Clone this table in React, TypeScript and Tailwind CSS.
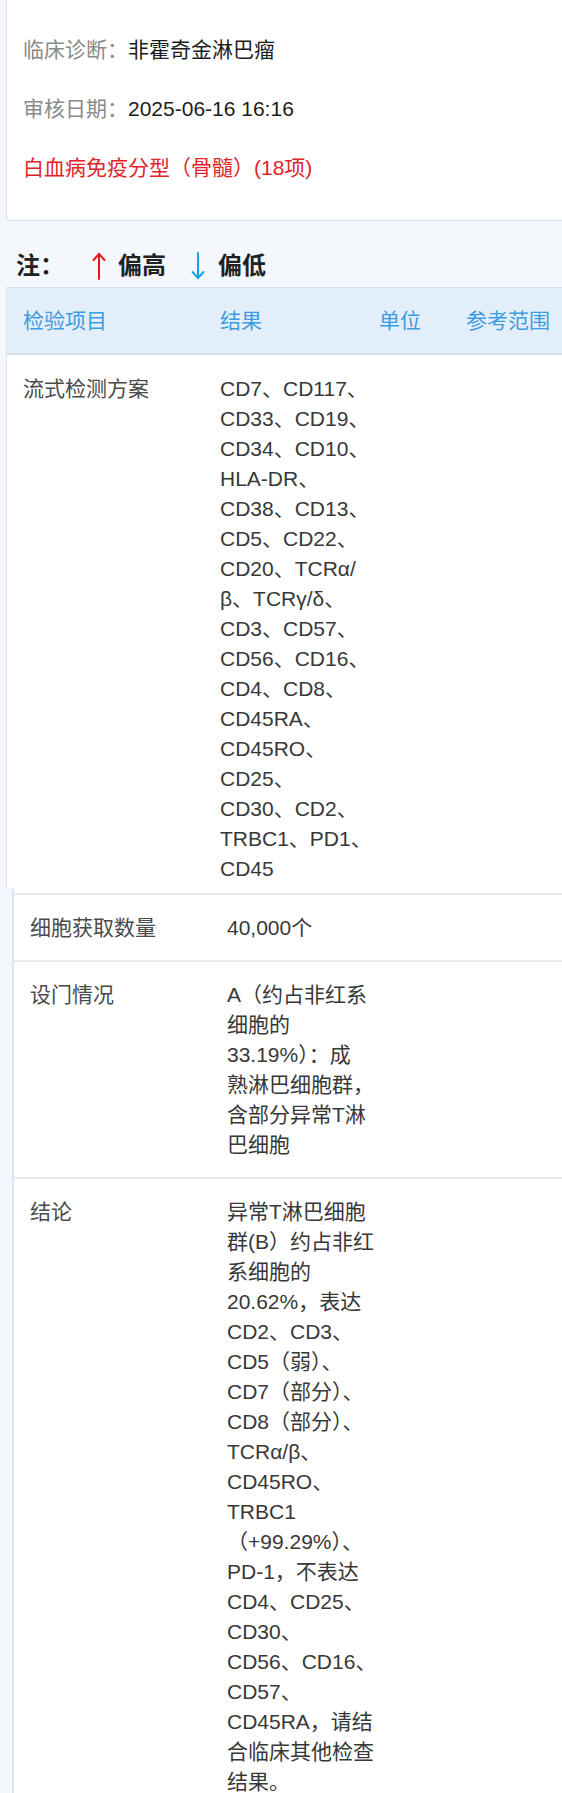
const FONT = 'font-["Liberation_Sans","Noto_Sans_CJK_SC",sans-serif]';

const panelLines = [
  'CD7、CD117、',
  'CD33、CD19、',
  'CD34、CD10、',
  'HLA-DR、',
  'CD38、CD13、',
  'CD5、CD22、',
  'CD20、TCRα/',
  'β、TCRγ/δ、',
  'CD3、CD57、',
  'CD56、CD16、',
  'CD4、CD8、',
  'CD45RA、',
  'CD45RO、',
  'CD25、',
  'CD30、CD2、',
  'TRBC1、PD1、',
  'CD45',
];

const gateLines = ['A（约占非红系', '细胞的', '33.19%）：成', '熟淋巴细胞群，', '含部分异常T淋', '巴细胞'];

const conclusionLines = [
  '异常T淋巴细胞',
  '群(B）约占非红',
  '系细胞的',
  '20.62%，表达',
  'CD2、CD3、',
  'CD5（弱）、',
  'CD7（部分）、',
  'CD8（部分）、',
  'TCRα/β、',
  'CD45RO、',
  'TRBC1',
  '（+99.29%）、',
  'PD-1，不表达',
  'CD4、CD25、',
  'CD30、',
  'CD56、CD16、',
  'CD57、',
  'CD45RA，请结',
  '合临床其他检查',
  '结果。',
];

function Lines({ lines }: { lines: string[] }) {
  return (
    <div>
      {lines.map((l, i) => (
        <div key={i} className="whitespace-nowrap">
          {l}
        </div>
      ))}
    </div>
  );
}

function Row({ label, lines }: { label: string; lines: string[] }) {
  return (
    <div className="grid grid-cols-[197px_1fr] border-t-2 border-[#e8ecf0] pl-4 pt-[18px] pb-[17px]">
      <div className="text-[#4a4a4a]">{label}</div>
      <div className="text-[#383838]">
        <Lines lines={lines} />
      </div>
    </div>
  );
}

function Arrow({ up, color }: { up: boolean; color: string }) {
  return (
    <svg width="14" height="28" viewBox="0 0 14 28" fill="none" stroke={color} strokeWidth="2" strokeLinecap="round">
      {up ? (
        <>
          <path d="M7 2 L7 27" />
          <path d="M1.5 8 L7 2 L12.5 8" />
        </>
      ) : (
        <>
          <path d="M7 1 L7 26" />
          <path d="M1.5 20 L7 26 L12.5 20" />
        </>
      )}
    </svg>
  );
}

export default function App() {
  return (
    <div className={`min-h-screen overflow-hidden bg-[#f4f8fc] text-[21px] leading-[30px] ${FONT}`}>
      {/* basic info card */}
      <div className="ml-[6px] -mr-4 -mt-[10px] border border-[#d3e4f5] bg-white pl-4 pt-[44px] pb-[37px]">
        <div className="flex flex-col gap-[29px]">
          <div className="flex">
            <span className="text-[#8a8a8a]">临床诊断：</span>
            <span className="text-[#1c1c1c]">非霍奇金淋巴瘤</span>
          </div>
          <div className="flex">
            <span className="text-[#8a8a8a]">审核日期：</span>
            <span className="text-[#1c1c1c]">2025-06-16 16:16</span>
          </div>
          <div className="text-[#e0252a]">白血病免疫分型（骨髓）(18项)</div>
        </div>
      </div>

      {/* legend */}
      <div className="mt-[30px] mb-[6px] flex h-[30px] items-center pl-4 text-[24px] font-bold text-[#222]">
        <span>注：</span>
        <span className="ml-[28px]">
          <Arrow up color="#e8161c" />
        </span>
        <span className="ml-[12px]">偏高</span>
        <span className="ml-[25px]">
          <Arrow up={false} color="#1ba3de" />
        </span>
        <span className="ml-[13px]">偏低</span>
      </div>

      {/* table part 1 */}
      <div className="ml-[6px] -mr-4 border-l border-[#d3e4f5] bg-white">
        <div className="grid h-[68px] grid-cols-[197px_159px_87px_1fr] items-center border-t border-b-2 border-t-[#cfe2f4] border-b-[#dde3ea] bg-[#e2eefa] pl-4 text-[#3d9be0]">
          <div>检验项目</div>
          <div>结果</div>
          <div>单位</div>
          <div>参考范围</div>
        </div>
        <div className="grid grid-cols-[197px_1fr] pl-4 pt-[19px] pb-[4px]">
          <div className="text-[#4a4a4a]">流式检测方案</div>
          <div className="text-[#383838]">
            <Lines lines={panelLines} />
          </div>
        </div>
      </div>

      {/* table part 2 */}
      <div className="ml-[12px] -mr-4 border-l-2 border-[#d6e8f8] bg-white pt-[5px]">
        <Row label="细胞获取数量" lines={['40,000个']} />
        <Row label="设门情况" lines={gateLines} />
        <Row label="结论" lines={conclusionLines} />
      </div>
    </div>
  );
}
